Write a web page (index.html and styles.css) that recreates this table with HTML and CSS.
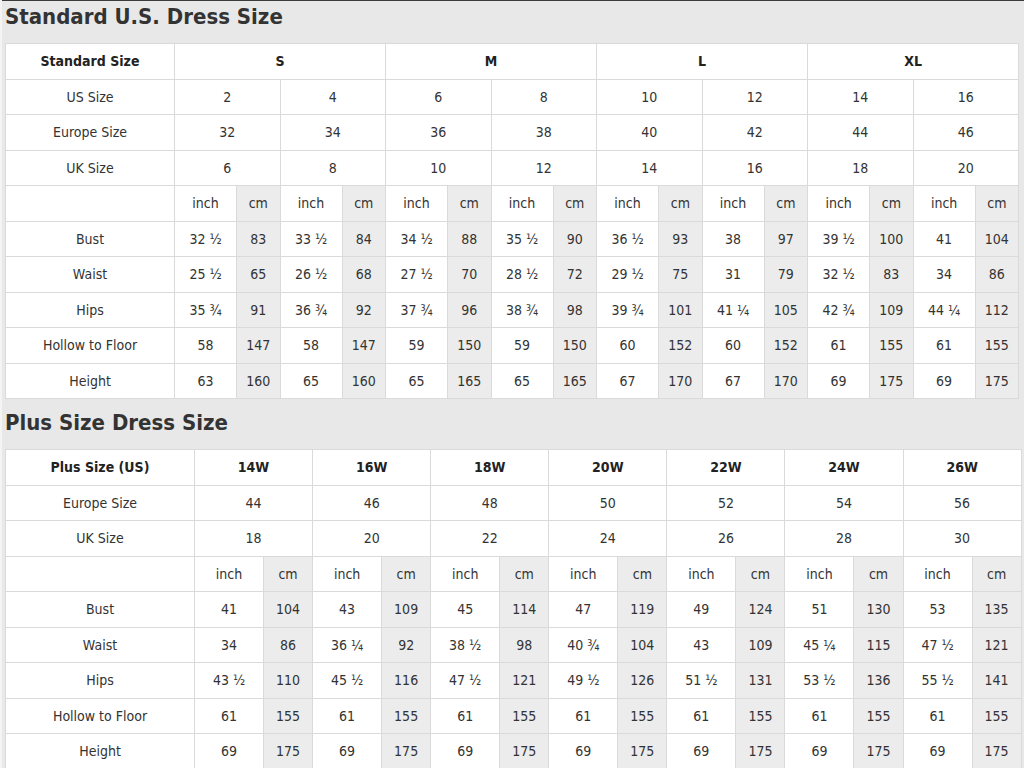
FILE: index.html
```html
<!DOCTYPE html>
<html>
<head>
<meta charset="utf-8">
<link rel="stylesheet" href="styles.css">
</head>
<body>
<div class="page">
  <h2 class="title">Standard U.S. Dress Size</h2>
  <table class="chart std">
    <colgroup>
      <col class="c-label-std">
      <col class="c-in-std"><col class="c-cm-std"><col class="c-in-std"><col class="c-cm-std">
      <col class="c-in-std"><col class="c-cm-std"><col class="c-in-std"><col class="c-cm-std">
      <col class="c-in-std"><col class="c-cm-std"><col class="c-in-std"><col class="c-cm-std">
      <col class="c-in-std"><col class="c-cm-std"><col class="c-in-std"><col class="c-cm-std">
    </colgroup>
    <tr class="head"><td>Standard Size</td><td colspan="4">S</td><td colspan="4">M</td><td colspan="4">L</td><td colspan="4">XL</td></tr>
    <tr><td>US Size</td><td colspan="2">2</td><td colspan="2">4</td><td colspan="2">6</td><td colspan="2">8</td><td colspan="2">10</td><td colspan="2">12</td><td colspan="2">14</td><td colspan="2">16</td></tr>
    <tr><td>Europe Size</td><td colspan="2">32</td><td colspan="2">34</td><td colspan="2">36</td><td colspan="2">38</td><td colspan="2">40</td><td colspan="2">42</td><td colspan="2">44</td><td colspan="2">46</td></tr>
    <tr><td>UK Size</td><td colspan="2">6</td><td colspan="2">8</td><td colspan="2">10</td><td colspan="2">12</td><td colspan="2">14</td><td colspan="2">16</td><td colspan="2">18</td><td colspan="2">20</td></tr>
    <tr><td></td><td>inch</td><td class="cm">cm</td><td>inch</td><td class="cm">cm</td><td>inch</td><td class="cm">cm</td><td>inch</td><td class="cm">cm</td><td>inch</td><td class="cm">cm</td><td>inch</td><td class="cm">cm</td><td>inch</td><td class="cm">cm</td><td>inch</td><td class="cm">cm</td></tr>
    <tr><td>Bust</td><td>32 ½</td><td class="cm">83</td><td>33 ½</td><td class="cm">84</td><td>34 ½</td><td class="cm">88</td><td>35 ½</td><td class="cm">90</td><td>36 ½</td><td class="cm">93</td><td>38</td><td class="cm">97</td><td>39 ½</td><td class="cm">100</td><td>41</td><td class="cm">104</td></tr>
    <tr><td>Waist</td><td>25 ½</td><td class="cm">65</td><td>26 ½</td><td class="cm">68</td><td>27 ½</td><td class="cm">70</td><td>28 ½</td><td class="cm">72</td><td>29 ½</td><td class="cm">75</td><td>31</td><td class="cm">79</td><td>32 ½</td><td class="cm">83</td><td>34</td><td class="cm">86</td></tr>
    <tr><td>Hips</td><td>35 ¾</td><td class="cm">91</td><td>36 ¾</td><td class="cm">92</td><td>37 ¾</td><td class="cm">96</td><td>38 ¾</td><td class="cm">98</td><td>39 ¾</td><td class="cm">101</td><td>41 ¼</td><td class="cm">105</td><td>42 ¾</td><td class="cm">109</td><td>44 ¼</td><td class="cm">112</td></tr>
    <tr><td>Hollow to Floor</td><td>58</td><td class="cm">147</td><td>58</td><td class="cm">147</td><td>59</td><td class="cm">150</td><td>59</td><td class="cm">150</td><td>60</td><td class="cm">152</td><td>60</td><td class="cm">152</td><td>61</td><td class="cm">155</td><td>61</td><td class="cm">155</td></tr>
    <tr><td>Height</td><td>63</td><td class="cm">160</td><td>65</td><td class="cm">160</td><td>65</td><td class="cm">165</td><td>65</td><td class="cm">165</td><td>67</td><td class="cm">170</td><td>67</td><td class="cm">170</td><td>69</td><td class="cm">175</td><td>69</td><td class="cm">175</td></tr>
  </table>

  <h2 class="title title-plus">Plus Size Dress Size</h2>
  <table class="chart plus">
    <colgroup>
      <col class="c-label-plus">
      <col class="c-in-plus"><col class="c-cm-plus"><col class="c-in-plus"><col class="c-cm-plus">
      <col class="c-in-plus"><col class="c-cm-plus"><col class="c-in-plus"><col class="c-cm-plus">
      <col class="c-in-plus"><col class="c-cm-plus"><col class="c-in-plus"><col class="c-cm-plus">
      <col class="c-in-plus"><col class="c-cm-plus">
    </colgroup>
    <tr class="head"><td>Plus Size (US)</td><td colspan="2">14W</td><td colspan="2">16W</td><td colspan="2">18W</td><td colspan="2">20W</td><td colspan="2">22W</td><td colspan="2">24W</td><td colspan="2">26W</td></tr>
    <tr><td>Europe Size</td><td colspan="2">44</td><td colspan="2">46</td><td colspan="2">48</td><td colspan="2">50</td><td colspan="2">52</td><td colspan="2">54</td><td colspan="2">56</td></tr>
    <tr><td>UK Size</td><td colspan="2">18</td><td colspan="2">20</td><td colspan="2">22</td><td colspan="2">24</td><td colspan="2">26</td><td colspan="2">28</td><td colspan="2">30</td></tr>
    <tr><td></td><td>inch</td><td class="cm">cm</td><td>inch</td><td class="cm">cm</td><td>inch</td><td class="cm">cm</td><td>inch</td><td class="cm">cm</td><td>inch</td><td class="cm">cm</td><td>inch</td><td class="cm">cm</td><td>inch</td><td class="cm">cm</td></tr>
    <tr><td>Bust</td><td>41</td><td class="cm">104</td><td>43</td><td class="cm">109</td><td>45</td><td class="cm">114</td><td>47</td><td class="cm">119</td><td>49</td><td class="cm">124</td><td>51</td><td class="cm">130</td><td>53</td><td class="cm">135</td></tr>
    <tr><td>Waist</td><td>34</td><td class="cm">86</td><td>36 ¼</td><td class="cm">92</td><td>38 ½</td><td class="cm">98</td><td>40 ¾</td><td class="cm">104</td><td>43</td><td class="cm">109</td><td>45 ¼</td><td class="cm">115</td><td>47 ½</td><td class="cm">121</td></tr>
    <tr><td>Hips</td><td>43 ½</td><td class="cm">110</td><td>45 ½</td><td class="cm">116</td><td>47 ½</td><td class="cm">121</td><td>49 ½</td><td class="cm">126</td><td>51 ½</td><td class="cm">131</td><td>53 ½</td><td class="cm">136</td><td>55 ½</td><td class="cm">141</td></tr>
    <tr><td>Hollow to Floor</td><td>61</td><td class="cm">155</td><td>61</td><td class="cm">155</td><td>61</td><td class="cm">155</td><td>61</td><td class="cm">155</td><td>61</td><td class="cm">155</td><td>61</td><td class="cm">155</td><td>61</td><td class="cm">155</td></tr>
    <tr><td>Height</td><td>69</td><td class="cm">175</td><td>69</td><td class="cm">175</td><td>69</td><td class="cm">175</td><td>69</td><td class="cm">175</td><td>69</td><td class="cm">175</td><td>69</td><td class="cm">175</td><td>69</td><td class="cm">175</td></tr>
  </table>
</div>
</body>
</html>
```

FILE: styles.css
```css
html, body {
  margin: 0;
  padding: 0;
  background: #f4f4f4;
}

body {
  font-family: "DejaVu Sans Condensed", "DejaVu Sans", sans-serif;
  color: #333;
  overflow: hidden;
}

.page {
  border-top: 1px solid #3c3c3c;
  margin-left: 2px;
  padding: 0 3px;
  background: #e8e8e8;
  min-height: 767px;
}

.title {
  margin: 0;
  height: 42px;
  padding-top: 1px;
  box-sizing: border-box;
  font-size: 22px;
  line-height: 30px;
  font-weight: bold;
  color: #333;
  letter-spacing: 0;
}

.title-plus {
  height: 50px;
  padding-top: 9px;
}

.chart {
  border-collapse: collapse;
  table-layout: fixed;
  background: #fff;
}

.chart td {
  border: 1px solid #dadada;
  text-align: center;
  vertical-align: middle;
  padding: 0;
  height: 34.5px;
  font-size: 14px;
  color: #333;
  white-space: nowrap;
}

.chart td.cm {
  background: #ececec;
}

.chart .head td {
  font-weight: bold;
  color: #222;
}

.std { width: 1013px; }
.c-label-std { width: 169px; }
.c-in-std { width: 62px; }
.c-cm-std { width: 43.5px; }

.plus { width: 1016px; }
.c-label-plus { width: 189px; }
.c-in-plus { width: 69px; }
.c-cm-plus { width: 49.1px; }
```
